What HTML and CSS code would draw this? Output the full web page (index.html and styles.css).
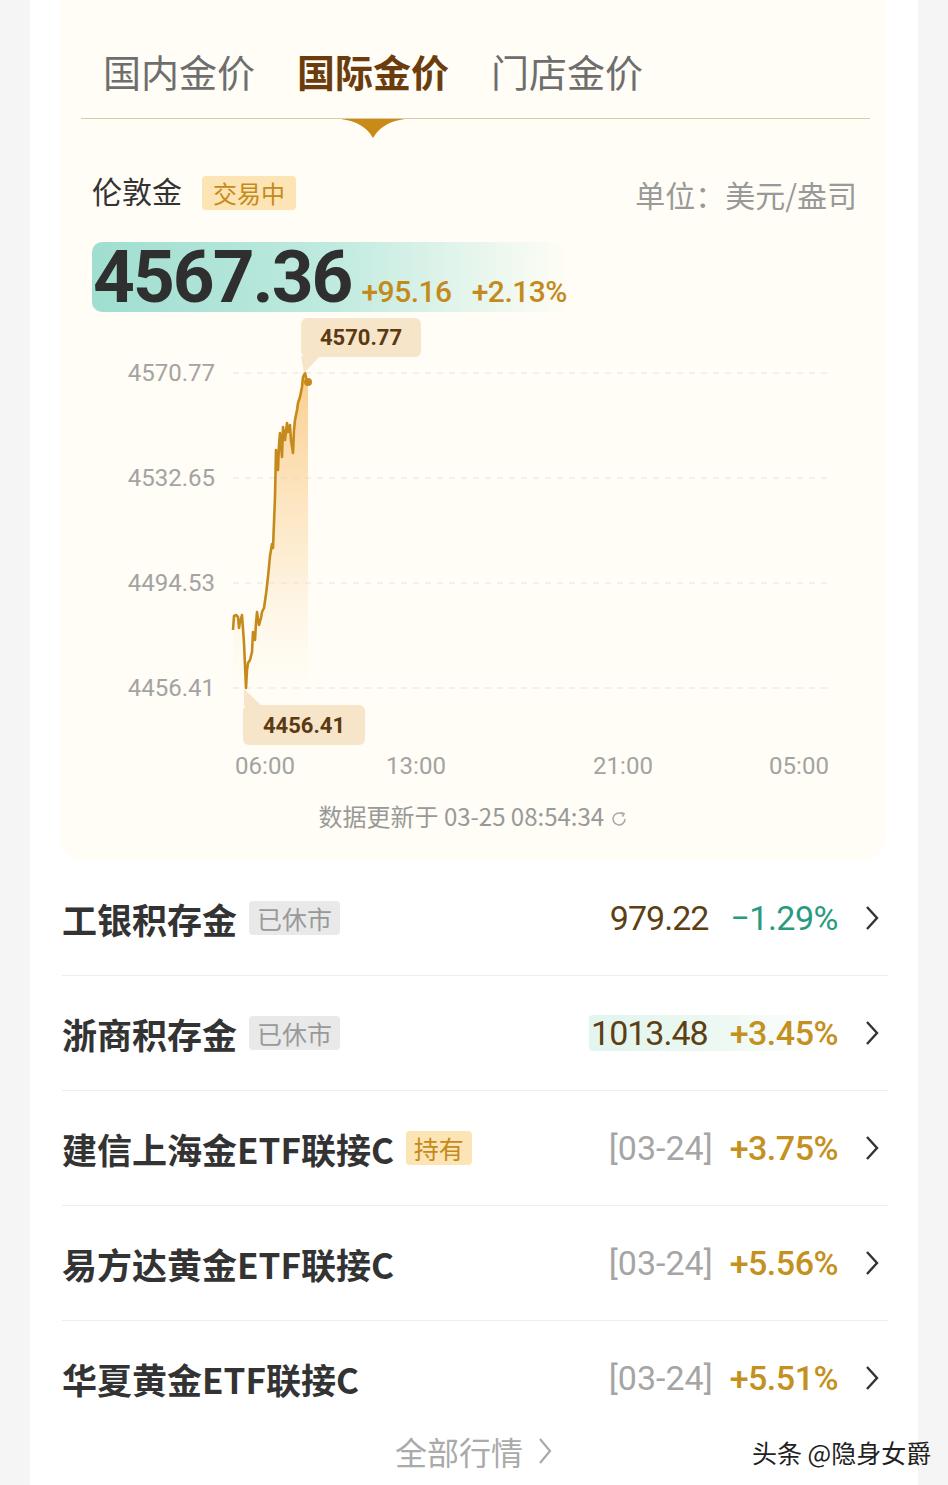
FILE: index.html
```html
<!DOCTYPE html>
<html lang="zh-CN">
<head>
  <meta charset="UTF-8">
  <meta name="viewport" content="width=device-width, initial-scale=1.0">
  <title>国际金价</title>
  <link rel="stylesheet" href="styles.css">
</head>
<body>
  <div class="page">
    <!-- 金价面板 -->
    <section class="panel">
      <nav class="tabs">
        <span class="tab">国内金价</span>
        <span class="tab active">国际金价
          <svg class="tab-arrow" width="64" height="19" viewBox="0 0 64 19"><path d="M0 0H64Q41 3 32 19Q23 3 0 0Z" fill="#c98a17"/></svg>
        </span>
        <span class="tab">门店金价</span>
      </nav>

      <div class="quote-head">
        <div class="quote-name">伦敦金 <span class="tag tag-gold">交易中</span></div>
        <div class="unit">单位：美元/盎司</div>
      </div>

      <div class="price-row">
        <span class="price">4567.36</span>
        <span class="change">+95.16</span>
        <span class="change">+2.13%</span>
      </div>

      <svg class="chart" width="826" height="472" viewBox="60 318 826 472">
        <defs>
          <linearGradient id="fill" x1="0" y1="0" x2="0" y2="1">
            <stop offset="0" stop-color="#f9c57a" stop-opacity="0.85"/>
            <stop offset="0.55" stop-color="#fbd9a6" stop-opacity="0.45"/>
            <stop offset="1" stop-color="#fff5e4" stop-opacity="0"/>
          </linearGradient>
        </defs>
        <g class="grid">
          <line x1="233" y1="373" x2="832" y2="373"/>
          <line x1="233" y1="478" x2="832" y2="478"/>
          <line x1="233" y1="583" x2="832" y2="583"/>
          <line x1="233" y1="688" x2="832" y2="688"/>
        </g>
        <g class="ylabel">
          <text x="215" y="381">4570.77</text>
          <text x="215" y="486">4532.65</text>
          <text x="215" y="591">4494.53</text>
          <text x="215" y="696">4456.41</text>
        </g>
        <path d="M233 630L234 616L236 615L238 617L239 628L240 622L242 615L244 643L246 688L247 670L248 663L250 660L252 652L253 632L255 640L256 623L257 612L259 625L261 618L262 612L264 608L266 594L268 577L270 556L272 544L273 548L275 497L276 450L278 470L279 445L280 433L282 457L283 427L285 440L287 423L288 432L290 425L291 440L293 453L294 430L295 420L297 410L298 403L300 397L302 387L303 377L305 373L307 382L308 380L308 700L233 700Z" fill="url(#fill)"/>
        <path class="line" d="M233 630L234 616L236 615L238 617L239 628L240 622L242 615L244 643L246 688L247 670L248 663L250 660L252 652L253 632L255 640L256 623L257 612L259 625L261 618L262 612L264 608L266 594L268 577L270 556L272 544L273 548L275 497L276 450L278 470L279 445L280 433L282 457L283 427L285 440L287 423L288 432L290 425L291 440L293 453L294 430L295 420L297 410L298 403L300 397L302 387L303 377L305 373L307 382L308 380"/>
        <circle cx="308" cy="382" r="4" fill="#c68a1c"/>
        <!-- 最高/最低提示 -->
        <path d="M301 356H320L304 373Z" fill="#f6e5c9"/>
        <rect x="301" y="318" width="120" height="39" rx="6" fill="#f6e5c9"/>
        <text class="tip" x="361" y="345">4570.77</text>
        <path d="M244 689L262 706H244Z" fill="#f6e5c9"/>
        <rect x="243" y="705" width="122" height="40" rx="6" fill="#f6e5c9"/>
        <text class="tip" x="304" y="733">4456.41</text>
        <g class="xlabel">
          <text x="265" y="774">06:00</text>
          <text x="416" y="774">13:00</text>
          <text x="623" y="774">21:00</text>
          <text x="799" y="774">05:00</text>
        </g>
      </svg>

      <p class="updated">数据更新于 03-25 08:54:34
        <svg width="18" height="18" viewBox="0 0 18 18"><path d="M15 9A6 6 0 1 1 12.5 4.1" fill="none" stroke="#aaa" stroke-width="1.6"/><path d="M11 2.5L14 3.6L12.6 6.6" fill="none" stroke="#aaa" stroke-width="1.6"/></svg>
      </p>
    </section>

    <!-- 行情列表 -->
    <ul class="list">
      <li class="row">
        <span class="name">工银积存金 <span class="tag tag-gray">已休市</span></span>
        <span class="vals"><span class="val">979.22</span><span class="pct down">−1.29%</span></span>
        <svg class="chev" width="16" height="28" viewBox="0 0 16 28"><path d="M3 3L13 14L3 25" fill="none" stroke="#333" stroke-width="2.4"/></svg>
      </li>
      <li class="row">
        <span class="name">浙商积存金 <span class="tag tag-gray">已休市</span></span>
        <span class="vals glow"><span class="val">1013.48</span><span class="pct up">+3.45%</span></span>
        <svg class="chev" width="16" height="28" viewBox="0 0 16 28"><path d="M3 3L13 14L3 25" fill="none" stroke="#333" stroke-width="2.4"/></svg>
      </li>
      <li class="row">
        <span class="name">建信上海金ETF联接C <span class="tag tag-gold">持有</span></span>
        <span class="vals dated"><span class="date">[03-24]</span><span class="pct up">+3.75%</span></span>
        <svg class="chev" width="16" height="28" viewBox="0 0 16 28"><path d="M3 3L13 14L3 25" fill="none" stroke="#333" stroke-width="2.4"/></svg>
      </li>
      <li class="row">
        <span class="name">易方达黄金ETF联接C</span>
        <span class="vals dated"><span class="date">[03-24]</span><span class="pct up">+5.56%</span></span>
        <svg class="chev" width="16" height="28" viewBox="0 0 16 28"><path d="M3 3L13 14L3 25" fill="none" stroke="#333" stroke-width="2.4"/></svg>
      </li>
      <li class="row">
        <span class="name">华夏黄金ETF联接C</span>
        <span class="vals dated"><span class="date">[03-24]</span><span class="pct up">+5.51%</span></span>
        <svg class="chev" width="16" height="28" viewBox="0 0 16 28"><path d="M3 3L13 14L3 25" fill="none" stroke="#333" stroke-width="2.4"/></svg>
      </li>
    </ul>

    <div class="more">全部行情
      <svg width="16" height="30" viewBox="0 0 16 30"><path d="M3 3L13 15L3 27" fill="none" stroke="#aaa" stroke-width="2.2"/></svg>
    </div>
  </div>

  <div class="watermark">头条 @隐身女爵</div>
</body>
</html>
```

FILE: styles.css
```css
/* 金价页面 */
body {
  margin: 0;
  background-color: #f5f5f5;
  font-family: "Noto Sans CJK SC", "Noto Sans", sans-serif;
  color: #333;
  height: 1485px;
  overflow: hidden;
  position: relative;
}

.page {
  width: 888px;
  margin-left: 30px;
  min-height: 1485px;
  background-color: #fff;
}

.panel {
  margin: 0 32px 0 30px;
  padding-bottom: 29px;
  background-color: #fffdf5;
  border-radius: 0 0 24px 24px;
}

.tabs {
  display: flex;
  gap: 42px;
  margin: 0 16px 0 21px;
  padding: 47px 0 0 22px;
  height: 71px;
  border-bottom: 1px solid #d9cba6;
}

.tab {
  position: relative;
  font-size: 38px;
  line-height: 48px;
  height: 48px;
  color: #6e6e6e;
}

.tab.active {
  color: #6b3d0e;
  font-weight: bold;
}

.tab-arrow {
  position: absolute;
  left: 50%;
  top: 72px;
  margin-left: -32px;
}

.quote-head {
  display: flex;
  justify-content: space-between;
  align-items: center;
  padding: 50px 29px 0 32px;
  height: 42px;
}

.quote-name {
  display: flex;
  align-items: center;
  gap: 20px;
  font-size: 30px;
  color: #333;
}

.quote-name .tag {
  margin-top: 6px;
  padding: 0 11px;
}

.unit {
  font-size: 30px;
  color: #999;
  padding-top: 8px;
}

.tag {
  display: inline-block;
  font-size: 24px;
  line-height: 34px;
  padding: 0 10px;
  border-radius: 4px;
  font-weight: normal;
}

.tag-gold {
  background-color: #fde4b4;
  color: #c48a1c;
}

.tag-gray {
  background-color: #e9e9e9;
  color: #999;
}

.price-row {
  display: flex;
  align-items: baseline;
  margin: 31px 0 0 32px;
  width: 475px;
  height: 70px;
  border-radius: 10px;
  background: linear-gradient(90deg, #9fded0 0%, #bfeadf 50%, rgba(255, 253, 245, 0) 100%);
  font-family: Roboto, "Noto Sans", sans-serif;
}

.price {
  font-size: 73px;
  line-height: 70px;
  font-weight: bold;
  letter-spacing: -2px;
  color: #2f2f2f;
  padding-left: 1px;
  margin-right: 10px;
}

.change {
  font-size: 30px;
  font-weight: 500;
  color: #c48a1c;
  margin-right: 20px;
  letter-spacing: -0.5px;
}

.chart {
  display: block;
  margin-top: 6px;
  font-family: Roboto, "Noto Sans", sans-serif;
}

.grid line {
  stroke: #ececec;
  stroke-width: 1.5;
  stroke-dasharray: 6 6;
}

.ylabel text,
.xlabel text {
  font-size: 24px;
  fill: #a3a3a3;
}

.ylabel text {
  text-anchor: end;
}

.xlabel text {
  text-anchor: middle;
}

.line {
  fill: none;
  stroke: #c68a1c;
  stroke-width: 2.6;
  stroke-linejoin: round;
}

.tip {
  font-size: 22px;
  font-weight: bold;
  fill: #5b3a12;
  text-anchor: middle;
}

.updated {
  margin: 10px 0 0;
  text-align: center;
  font-size: 24px;
  line-height: 32px;
  color: #999;
}

.updated svg {
  vertical-align: -2px;
}

.list {
  list-style: none;
  margin: 0;
  padding: 0 30px 0 32px;
}

.row {
  display: flex;
  align-items: center;
  height: 114px;
  border-bottom: 1px solid #eeeeee;
}

.row:last-child {
  border-bottom: none;
}

.name {
  flex: 1;
  display: flex;
  align-items: center;
  gap: 12px;
  font-size: 35px;
  font-weight: bold;
  color: #333;
}

.name .tag {
  font-size: 25px;
  line-height: 34px;
  padding: 0 8px;
}

.vals {
  display: flex;
  align-items: center;
  gap: 22px;
  font-family: Roboto, "Noto Sans", sans-serif;
  font-size: 34px;
  line-height: 36px;
  padding-left: 2px;
}

.vals.dated {
  gap: 17px;
}

.vals.glow {
  background: linear-gradient(90deg, #e2f5ee 0%, #ecf8f2 50%, rgba(255, 255, 255, 0) 95%);
  border-radius: 4px;
}

.val {
  color: #5e3f14;
  letter-spacing: -1px;
}

.date {
  color: #a5a5a5;
}

.pct {
  letter-spacing: -0.5px;
}

.pct.up {
  color: #c49020;
  font-weight: 500;
}

.pct.down {
  color: #2a9a7e;
}

.chev {
  margin: 0 8px 0 26px;
}

.more {
  display: flex;
  justify-content: center;
  align-items: center;
  gap: 14px;
  font-size: 32px;
  color: #aaa;
  height: 40px;
  margin-top: -4px;
}

.watermark {
  position: absolute;
  left: 752px;
  top: 1434px;
  font-size: 25px;
  color: #222;
  text-shadow: 0 0 2px #fff, 0 0 2px #fff;
}
```
